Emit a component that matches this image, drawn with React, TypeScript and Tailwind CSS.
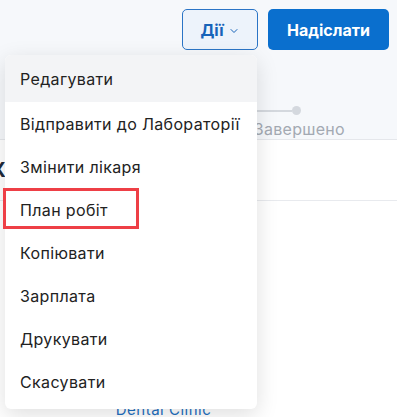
import { ChevronDown } from "lucide-react";

const actions = [
  "Редагувати",
  "Відправити до Лабораторії",
  "Змінити лікаря",
  "План робіт",
  "Копіювати",
  "Зарплата",
  "Друкувати",
  "Скасувати",
];

export default function App() {
  return (
    <div
      className="relative h-[417px] w-[397px] overflow-hidden bg-white text-[#222]"
      style={{ fontFamily: "Inter, 'Noto Sans', sans-serif" }}
    >
      {/* page header */}
      <header className="h-[140px] border-b border-[#e5e7eb] bg-[#f6f8fb]">
        <div className="flex justify-end gap-[10px] pr-[8px] pt-[9px]">
          <button className="flex h-[41px] w-[76px] items-center justify-center gap-[4px] rounded-[5px] border border-[#2a74c6] bg-[#edf3fb] text-[16px] font-bold text-[#1763b9]">
            Дії
            <ChevronDown className="mt-[3px] h-[12px] w-[12px]" strokeWidth={2} />
          </button>
          <button className="h-[41px] w-[121px] rounded-[5px] bg-[#0a6fce] text-[16px] font-bold text-white">
            Надіслати
          </button>
        </div>
        <div className="mt-[56px] flex justify-end pr-[52px]">
          <div className="flex flex-col items-end">
            <div className="mr-[44px] flex items-center">
              <div className="h-[2px] w-[50px] bg-[#d4d8de]" />
              <div className="h-[9px] w-[9px] rounded-full bg-[#d4d8de]" />
            </div>
            <span className="mt-[2px] text-[16px] tracking-[0.3px] text-[#a3a9b2]">Завершено</span>
          </div>
        </div>
      </header>

      <section className="flex h-[61px] items-center border-b border-[#e8eaee]">
        <span className="-ml-[9px] text-[20px] font-bold text-[#1f2a3a]">Х</span>
      </section>

      <div className="flex h-[216px] items-end justify-center pr-[70px]">
        <span className="text-[15px] leading-none tracking-[0.5px] text-[#1e6fbf]">Dental Clinic</span>
      </div>

      {/* dropdown menu */}
      <div className="absolute left-[5px] top-[55px] w-[252px] overflow-hidden rounded-[6px] bg-white pb-[6px] shadow-[0_6px_22px_rgba(0,0,0,0.13)]">
        {actions.map((a, i) => (
          <div
            key={a}
            className={
              i === 0
                ? "flex h-[47px] items-center bg-[#f3f4f6] px-[15px] text-[16px] tracking-[0.35px]"
                : "flex h-[43px] items-center px-[15px] text-[16px] tracking-[0.35px]"
            }
          >
            {a}
          </div>
        ))}
      </div>

      {/* annotation */}
      <div className="absolute left-[3px] top-[188px] h-[41px] w-[136px] border-[3px] border-[#ee3f46]" />
    </div>
  );
}
